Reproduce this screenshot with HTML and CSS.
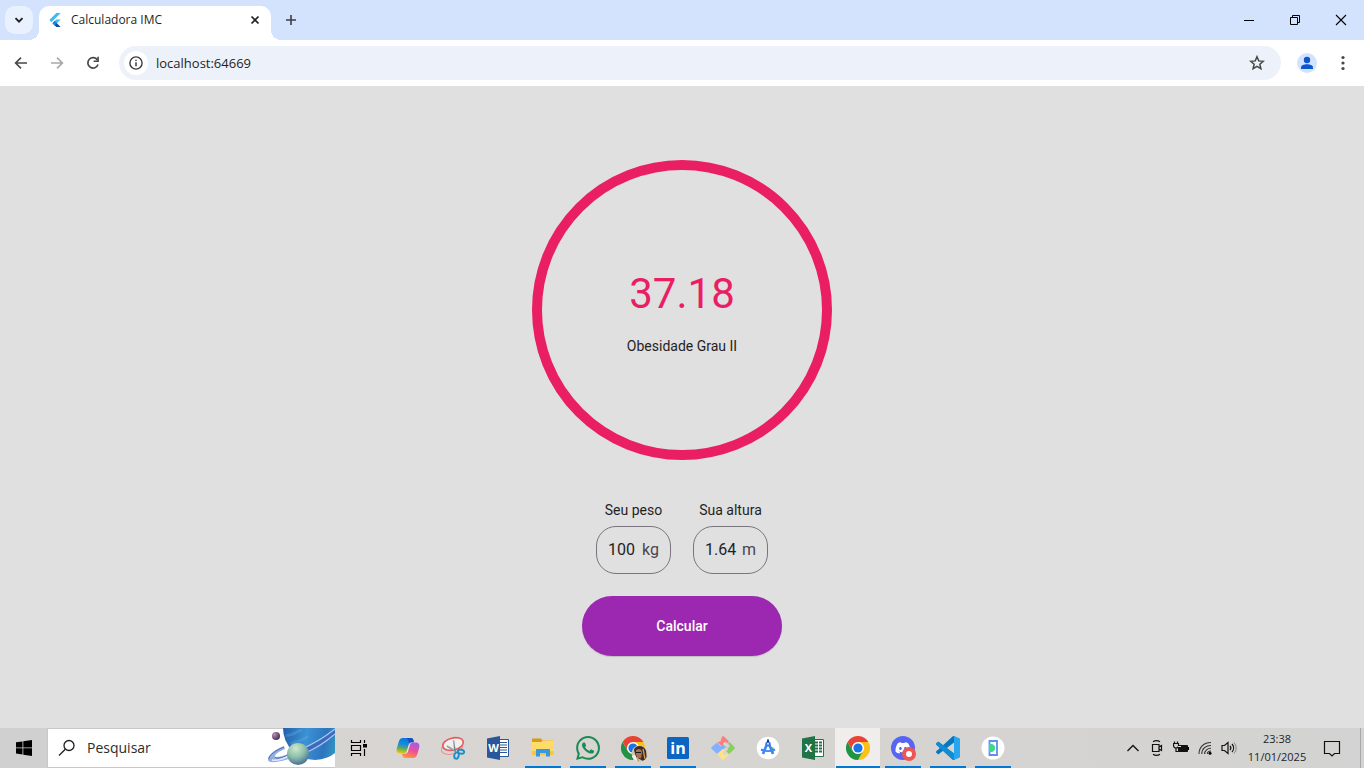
FILE: index.html
```html
<!DOCTYPE html>
<html lang="pt-BR">
<head>
<meta charset="utf-8">
<meta name="viewport" content="width=device-width, initial-scale=1">
<title>Calculadora IMC</title>
<link rel="stylesheet" href="styles.css">
</head>
<body class="desktop">
<svg class="defs" width="0" height="0" aria-hidden="true">
  <defs>
    <symbol id="chrome" viewBox="0 0 24 24">
      <circle cx="12" cy="12" r="11" fill="#fff"/>
      <path fill="#ea4335" d="M1.6 6A12 12 0 0 1 22.4 6H12A6 6 0 0 0 6.8 15Z"/>
      <path fill="#fbc116" d="M22.4 6A12 12 0 0 1 12 24L17.2 15A6 6 0 0 0 12 6Z"/>
      <path fill="#229342" d="M12 24A12 12 0 0 1 1.6 6L6.8 15A6 6 0 0 0 17.2 15Z"/>
      <circle cx="12" cy="12" r="4.6" fill="#1a73e8"/>
    </symbol>
  </defs>
</svg>

<header class="tabstrip">
  <button class="tab-search" aria-label="Pesquisar guias">
    <svg width="12" height="12" viewBox="0 0 12 12"><path d="M2.5 4.2 6 7.7 9.500 4.200" fill="none" stroke="#1f1f1f" stroke-width="1.900"/></svg>
  </button>
  <div class="tab">
    <svg width="12" height="14" viewBox="2 0 20 24"><path fill="#42b8f5" d="M14.300 0 2.300 12 6 15.700 21.700 0Z"/><path fill="#42b8f5" d="M14.300 11.070 7.860 17.530l3.700 3.700L21.700 11.070Z"/><path fill="#0b4f9e" d="M11.560 13.830l-3.700 3.700L14.330 24h7.370l-6.460-6.470Z"/><path fill="#1a86dc" d="M7.860 17.530l3.700-3.700 3.700 3.700-3.700 3.700Z"/></svg>
    <span class="tab-title">Calculadora IMC</span>
    <button class="tab-close" aria-label="Fechar guia">
      <svg width="10" height="10" viewBox="0 0 10 10"><path d="M1.500 1.500l7 7M8.500 1.500l-7 7" stroke="#1f1f1f" stroke-width="1.700"/></svg>
    </button>
  </div>
  <button class="new-tab" aria-label="Nova guia">
    <svg width="12" height="12" viewBox="0 0 12 12"><path d="M6 1v10M1 6h10" stroke="#3c3f43" stroke-width="1.600"/></svg>
  </button>
  <div class="window-controls">
    <button aria-label="Minimizar"><svg width="12" height="12" viewBox="0 0 12 12"><path d="M1 6.500h10" stroke="#000"/></svg></button>
    <button aria-label="Restaurar"><svg width="12" height="12" viewBox="0 0 12 12"><path d="M1.500 3.500h7v7h-7zM3.500 3.500v-2h7v7h-2" fill="none" stroke="#000"/></svg></button>
    <button aria-label="Fechar"><svg width="12" height="12" viewBox="0 0 12 12"><path d="M1 1l10 10M11 1 1 11" stroke="#000" stroke-width="1.100"/></svg></button>
  </div>
</header>

<nav class="toolbar">
  <button class="nav-button" aria-label="Voltar"><svg width="16" height="16" viewBox="0 0 16 16"><path d="M14 8H3M8 2.600 2.600 8 8 13.400" fill="none" stroke="#474747" stroke-width="1.600"/></svg></button>
  <button class="nav-button" aria-label="Avançar"><svg width="16" height="16" viewBox="0 0 16 16"><path d="M2 8h11M8 2.600 13.400 8 8 13.400" fill="none" stroke="#a8a8a8" stroke-width="1.600"/></svg></button>
  <button class="nav-button" aria-label="Recarregar"><svg width="16" height="16" viewBox="0 0 16 16"><path d="M13 9.500A5.200 5.200 0 1 1 12.400 5" fill="none" stroke="#474747" stroke-width="1.700"/><path d="M13.900 1.800v5.300H8.600V5.600h3.700V1.800Z" fill="#474747"/></svg></button>
  <div class="omnibox">
    <button class="site-info" aria-label="Informações do site"><svg width="14" height="14" viewBox="0 0 14 14"><circle cx="7" cy="7" r="6.100" fill="none" stroke="#3c3c3c" stroke-width="1.400"/><path d="M7 6.200v4M7 3.700v1.400" stroke="#3c3c3c" stroke-width="1.500"/></svg></button>
    <input class="url" type="text" aria-label="Endereço" value="localhost:64669">
    <button class="star" aria-label="Adicionar aos favoritos"><svg width="16" height="16" viewBox="0 0 16 16"><path d="M8 1.700l1.750 4.200 4.550.380-3.450 3 1.050 4.450L8 11.350l-3.900 2.380 1.050-4.450-3.450-3 4.550-.380Z" fill="none" stroke="#474747" stroke-width="1.500"/></svg></button>
  </div>
  <button class="profile" aria-label="Perfil"><svg width="20" height="20" viewBox="0 0 20 20"><circle cx="10" cy="10" r="10" fill="#d3e3fd"/><circle cx="10" cy="7" r="3.200" fill="#0b57d0"/><path d="M4 16v-1.300C4 12.300 7 11.300 10 11.300s6 1 6 3.400V16Z" fill="#0b57d0"/></svg></button>
  <button class="menu" aria-label="Menu"><svg width="16" height="16" viewBox="0 0 16 16" fill="#474747"><circle cx="8" cy="2.500" r="1.600"/><circle cx="8" cy="8" r="1.600"/><circle cx="8" cy="13.500" r="1.600"/></svg></button>
</nav>

<main class="app">
  <form class="calculator">
    <output class="result" for="peso altura">
      <span class="result-value">37.18</span>
      <span class="result-label">Obesidade Grau II</span>
    </output>
    <div class="fields">
      <div class="field">
        <label for="peso">Seu peso</label>
        <div class="field-box"><input id="peso" type="text" value="100"><span>kg</span></div>
      </div>
      <div class="field">
        <label for="altura">Sua altura</label>
        <div class="field-box"><input id="altura" type="text" value="1.64"><span>m</span></div>
      </div>
    </div>
    <button class="submit" type="button">Calcular</button>
  </form>
</main>

<footer class="taskbar">
  <button class="start" aria-label="Iniciar"><svg width="16" height="16" viewBox="0 0 16 16"><path d="M0 2.300 6.500 1.400v6.100H0ZM7.300 1.300 16 0v7.500H7.300ZM0 8.300h6.500v6.200L0 13.600ZM7.300 8.300H16V16l-8.700-1.300Z"/></svg></button>
  <div class="search">
    <svg class="search-glass" width="18" height="18" viewBox="0 0 18 18"><circle cx="11" cy="6.500" r="5" fill="none" stroke="#1f1f1f" stroke-width="1.300"/><path d="M7.300 10.200 1 16.500" stroke="#1f1f1f" stroke-width="1.300"/></svg>
    <input class="search-input" type="text" aria-label="Pesquisar" placeholder="Pesquisar">
    <svg class="planets" width="68" height="40" viewBox="0 0 68 40">
      <defs>
        <linearGradient id="planet" x1="0" y1=".6" x2="1" y2=".8"><stop offset="0" stop-color="#2560ad"/><stop offset=".35" stop-color="#3b93d3"/><stop offset=".65" stop-color="#2d75bf"/><stop offset="1" stop-color="#39b3c4"/></linearGradient>
        <linearGradient id="ring" x1="0" x2="1"><stop offset="0" stop-color="#8196d2"/><stop offset=".3" stop-color="#b8d2f2"/><stop offset=".6" stop-color="#4668bb"/><stop offset="1" stop-color="#9db8e8"/></linearGradient>
        <radialGradient id="green" cx=".4" cy=".25" r=".8"><stop offset="0" stop-color="#cfe9ca"/><stop offset=".5" stop-color="#8dbfae"/><stop offset="1" stop-color="#41668e"/></radialGradient>
        <radialGradient id="moon" cx=".3" cy=".3" r=".8"><stop offset="0" stop-color="#b792b0"/><stop offset="1" stop-color="#422757"/></radialGradient>
      </defs>
      <circle cx="48" cy="0" r="32" fill="url(#planet)"/>
      <path d="M19 7c6 2 10-4 16-5M24 16c6-3 12-3 17-8" stroke="#66b7df" stroke-width="3" fill="none" opacity=".3"/>
      <path d="M17 18C9 21 0 27 1 32c1 4 13 2 23-2l-3-4c-7 3-13 4-13 2 0-2 5-5 10-7Z" fill="#93aee0"/>
      <path d="M17 19C9 22 2 27 2 31M8 29c1 2 7 1 13-2" fill="none" stroke="#5169b2"/>
      <path d="M5 32c4 1 11-1 17-4" fill="none" stroke="#dbe9fb" stroke-width="1.500"/>
      <path d="M34 22C47 17 59 9 68 1v6C60 14 50 20 38 25Z" fill="#3f69bd"/>
      <path d="M34 21C47 16 59 8 68 1M38 25C50 20 60 13 68 6" fill="none" stroke="#a9c8f2" stroke-width="1.200"/>
      <circle cx="31" cy="26" r="11" fill="url(#green)"/>
      <circle cx="9" cy="8" r="4" fill="url(#moon)"/>
    </svg>
  </div>
  <button class="task-view" aria-label="Visão de tarefas"><svg width="18" height="16" viewBox="0 0 18 16"><path d="M1.500 0v2.500h9V0M1.500 16v-2.500h9V16M1.500 5.500h9v5h-9zM14.500 0v3M14.500 9v7" fill="none" stroke="#000" stroke-width="1.200"/><path d="M13 4h4v3.500h-4Z"/></svg></button>

  <div class="apps">
    <button class="app-button" aria-label="Copilot"><svg width="24" height="24" viewBox="0 0 24 24">
      <defs>
        <linearGradient id="cpa" x1=".4" y1="0" x2=".2" y2="1"><stop offset="0" stop-color="#0876dd"/><stop offset=".4" stop-color="#168ce0"/><stop offset=".65" stop-color="#59ac59"/><stop offset="1" stop-color="#fbc80d"/></linearGradient>
        <linearGradient id="cpb" x1=".7" y1="0" x2=".3" y2="1"><stop offset="0" stop-color="#a55be8"/><stop offset=".5" stop-color="#ee4f95"/><stop offset="1" stop-color="#ff9a3d"/></linearGradient>
      </defs>
      <path fill="url(#cpa)" d="M7 2h8c1.500 0 2 .8 2.400 2L18 6.200h-2c-2 0-2.600 1-3.200 3L11 15c-.5 1.800-1.500 2.500-3 2.500H4C1 17.500 0 15 1 11.500L3 5c.6-2 2-3 4-3Z"/>
      <path fill="#1a4ebc" d="M11 2h4c1.500 0 2 .8 2.400 2L18 6.200h-2c-1.400 0-2 .7-2.500 1.500Z"/>
      <path fill="url(#cpb)" d="M17 22H9c-1.500 0-2-.8-2.400-2L6 17.800h2c2 0 2.600-1 3.200-3L13 9c.5-1.800 1.500-2.500 3-2.500h4c3 0 4 2.500 3 6L21 19c-.6 2-2 3-4 3Z"/>
      <path fill="#e9e1e3" d="M12.500 9.500c.5-2 1.500-3 3.500-3-1.200.5-1.700 1.500-2 2.500l-2 6.500c-.6 1.700-1.700 2.300-4 2.300 1.700-.5 2.200-1.300 2.700-2.800Z"/>
    </svg></button>
    <button class="app-button" aria-label="Ferramenta de Captura"><svg width="24" height="24" viewBox="0 0 24 24">
      <ellipse cx="11" cy="12" rx="11" ry="6" transform="rotate(-14 11 12)" fill="none" stroke="#ef9290"/>
      <ellipse cx="12" cy="8" rx="10.500" ry="6" transform="rotate(-14 12 8)" fill="#f1efef" stroke="#e45b5b" stroke-width="1.600"/>
      <path d="M12.500 4.500 14 14.500M6 10l9 5.500" stroke="#7b858d" stroke-width="1.500"/>
      <path d="M13 4.500 12.500 13M6 9.500l7 4.500" stroke="#c7ced2" stroke-width=".8"/>
      <ellipse cx="15.500" cy="19.500" rx="2.200" ry="3.200" transform="rotate(12 15.500 19.500)" fill="none" stroke="#1d8fc7" stroke-width="1.900"/>
      <ellipse cx="20" cy="15.700" rx="3.200" ry="2" transform="rotate(12 20 15.700)" fill="none" stroke="#1d8fc7" stroke-width="1.900"/>
    </svg></button>
    <button class="app-button" aria-label="Word"><svg width="24" height="24" viewBox="0 0 24 24">
      <path d="M12 3.500h10.500v17H12Z" fill="#fff" stroke="#2b579a"/><path d="M14 6.500h7M14 9h7M14 11.500h7M14 14h7M14 16.500h7" stroke="#2b579a" stroke-width="1.100"/><path d="M1 2.500 14 0v24L1 21.500Z" fill="#2b579a"/><text class="office-letter" x="7.500" y="16" text-anchor="middle">W</text>
    </svg></button>
    <button class="app-button running" aria-label="Explorador de Arquivos"><svg width="24" height="24" viewBox="0 0 24 24">
      <path d="M1 3.500c0-.6.300-1 1-1h8l1.500 2H22v4H1Z" fill="#d99b16"/><path d="M1 6h9l2-1.500h9.500c.6 0 1 .4 1 1V19H1Z" fill="#ffdb6a"/><path d="M1 15h21.500v4H1Z" fill="#f7c545"/><path d="M5 20.500V14c0-.6.400-1 1-1h12c.6 0 1 .4 1 1v6.500h-4V17H9v3.500Z" fill="#3797df"/>
    </svg></button>
    <button class="app-button running" aria-label="WhatsApp"><svg width="24" height="24" viewBox="0 0 24 24" fill="#1a8b55"><path d="M17.472 14.382c-.297-.149-1.758-.867-2.030-.967-.273-.099-.471-.148-.670.150-.197.297-.767.966-.940 1.164-.173.199-.347.223-.644.075-.297-.150-1.255-.463-2.390-1.475-.883-.788-1.480-1.761-1.653-2.059-.173-.297-.018-.458.130-.606.134-.133.298-.347.446-.520.149-.174.198-.298.298-.497.099-.198.050-.371-.025-.520-.075-.149-.669-1.612-.916-2.207-.242-.579-.487-.500-.669-.510-.173-.008-.371-.010-.570-.010-.198 0-.520.074-.792.372-.272.297-1.040 1.016-1.040 2.479 0 1.462 1.065 2.875 1.213 3.074.149.198 2.096 3.200 5.077 4.487.709.306 1.262.489 1.694.625.712.227 1.360.195 1.871.118.571-.085 1.758-.719 2.006-1.413.248-.694.248-1.289.173-1.413-.074-.124-.272-.198-.570-.347m-5.421 7.403h-.004a9.870 9.870 0 0 1-5.031-1.378l-.361-.214-3.741.982.998-3.648-.235-.374a9.860 9.860 0 0 1-1.510-5.260c.001-5.450 4.436-9.884 9.888-9.884 2.640 0 5.122 1.030 6.988 2.898a9.825 9.825 0 0 1 2.893 6.994c-.003 5.450-4.437 9.884-9.885 9.884m8.413-18.297A11.815 11.815 0 0 0 12.050 0C5.495 0 .160 5.335.157 11.892c0 2.096.547 4.142 1.588 5.945L.057 24l6.305-1.654a11.882 11.882 0 0 0 5.683 1.448h.005c6.554 0 11.890-5.335 11.893-11.893a11.821 11.821 0 0 0-3.480-8.413z"/></svg></button>
    <button class="app-button running" aria-label="Chrome, perfil"><svg class="badged" width="24" height="24" viewBox="0 0 24 24">
      <use href="#chrome" width="24" height="24"/>
      <clipPath id="face"><circle cx="18.500" cy="17.500" r="8"/></clipPath>
      <g clip-path="url(#face)"><path d="M10 9h18v18H10Z" fill="#cfc3b2"/><path d="M13 14c1-5 10-6 12 1l1 10h-4l-7-4Z" fill="#3c2c25"/><path d="M15 14c3-2 6-1 6 3l-1 5c-3 1-5-2-5-4Z" fill="#a87350"/><path d="M10 21c3-4 6-2 6 5h-6Z" fill="#f5eee8"/><path d="M16 21l2 6M22 13l2 10" stroke="#d09d45" stroke-width="1.300"/><path d="M15 16.500h5" stroke="#191717" stroke-width="1.200"/></g>
    </svg></button>
    <button class="app-button running" aria-label="LinkedIn"><svg width="22" height="22" viewBox="0 0 22 22"><rect width="22" height="22" rx="1.500" fill="#0a66c2"/><text class="linkedin-letters" x="11" y="17" text-anchor="middle">in</text></svg></button>
    <button class="app-button" aria-label="Git"><svg width="24" height="24" viewBox="0 0 24 24">
      <path fill="#ff7b80" d="M11 .6c.6-.6 1.400-.6 2 0L18 5.500l-2 2a2 2 0 1 0-2.500 2.500L12 11.500 6.500 6l3-.5Z"/>
      <path fill="#83b1ff" d="M6 6.500l4 4a2 2 0 1 1 1.500 2.500L6 17.800.700 13c-.7-.6-.7-1.400 0-2Z"/>
      <path fill="#87cf60" d="M18.500 6l4.900 5c.6.600.6 1.400 0 2L18 18l-3-3a2 2 0 1 0-2-2L12.500 12l2-2a2 2 0 1 0 2-2Z"/>
      <path fill="#ffe382" d="M12 13.500l2 1.500a2 2 0 1 0 2 2l1.500 1.500-4.500 5c-.6.600-1.400.600-2 0l-4.500-5Z"/>
    </svg></button>
    <button class="app-button" aria-label="Android Studio"><svg width="24" height="24" viewBox="0 0 24 24">
      <circle cx="12" cy="12" r="11.300" fill="#fff"/><path d="M14 11.500h3.500V16H15Z" fill="#35b768"/><path d="M5 13.500c4 2 10 2 14 0" stroke="#4285f4" stroke-width="2" fill="none"/><path d="M11 8 7 18M13 8l4 10" stroke="#4285f4" stroke-width="2.600"/><circle cx="12" cy="7.800" r="2.600" fill="#3976dd"/><circle cx="12" cy="7.800" r=".9" fill="#fff"/><path d="M11 3.500h2v2.500h-2Z" fill="#25396f"/>
    </svg></button>
    <button class="app-button" aria-label="Excel"><svg width="24" height="24" viewBox="0 0 24 24">
      <path d="M12 3.500h10.500v17H12Z" fill="#fff" stroke="#217346"/><path d="M14 6.500h3M18 6.500h3M14 9.500h3M18 9.500h3M14 12.500h3M18 12.500h3M14 15.500h3M18 15.500h3" stroke="#217346" stroke-width="1.800"/><path d="M1 2.500 14 0v24L1 21.500Z" fill="#217346"/><text class="office-letter" x="7.500" y="16" text-anchor="middle">X</text>
    </svg></button>
    <button class="app-button running active" aria-label="Google Chrome"><svg width="24" height="24" viewBox="0 0 24 24"><use href="#chrome"/></svg></button>
    <button class="app-button running" aria-label="Discord"><svg class="badged" width="24" height="24" viewBox="0 0 24 24">
      <circle cx="12" cy="12" r="12" fill="#5865f2"/>
      <g transform="translate(4.500 4.500) scale(.62)"><path fill="#fff" d="M20.317 4.370a19.800 19.800 0 0 0-4.885-1.515l-.687 1.286a18.300 18.300 0 0 0-5.487 0l-.696-1.286a19.740 19.740 0 0 0-4.885 1.515C.533 9.046-.319 13.580.100 18.058c2.050 1.560 4.070 2.480 6.020 3.090l1.310-2.020-1.920-1 .5-.42c3.930 1.793 8.180 1.793 12.060 0l.5.420-1.920 1 1.230 2.100c1.960-.610 3.950-1.520 6-3.030.5-5.310-.84-9.810-3.560-13.830zM8.020 15.330c-1.180 0-2.160-1.090-2.160-2.420s.960-2.420 2.160-2.420 2.180 1.100 2.160 2.420c0 1.330-.960 2.420-2.160 2.420zm7.980 0c-1.190 0-2.160-1.090-2.160-2.420s.950-2.420 2.160-2.420 2.170 1.100 2.150 2.420c0 1.330-.940 2.420-2.150 2.420z"/></g>
      <circle cx="18" cy="18" r="7" fill="#ed5656"/><circle cx="18" cy="18" r="3" fill="#fff"/>
    </svg></button>
    <button class="app-button running" aria-label="Visual Studio Code"><svg width="24" height="24" viewBox="0 0 24 24">
      <path fill="#0877bd" d="M23.150 2.587 18.210.210a1.494 1.494 0 0 0-1.705.290l-9.460 8.630-4.120-3.128a.999.999 0 0 0-1.276.057L.327 7.261A1 1 0 0 0 .326 8.740L3.899 12 .326 15.260a1 1 0 0 0 .001 1.479L1.650 17.940a.999.999 0 0 0 1.276.057l4.120-3.128 9.460 8.630a1.492 1.492 0 0 0 1.704.290l4.942-2.377A1.500 1.500 0 0 0 24 20.060V3.939a1.500 1.500 0 0 0-.850-1.352zm-5.146 14.861L10.826 12l7.178-5.448z"/>
      <path fill="#27a7f1" d="M18 .200 23.150 2.587A1.500 1.500 0 0 1 24 3.939V20.060a1.500 1.500 0 0 1-.850 1.350L18 23.800Z"/>
      <path fill="#118dd4" d="M1.650 6.060a1 1 0 0 1 1.276-.06L18 17.450v6.350a1.500 1.500 0 0 1-1.500-.3L.330 8.740a1 1 0 0 1 0-1.480Z"/>
    </svg></button>
    <button class="app-button running" aria-label="Emulador"><svg width="24" height="24" viewBox="0 0 24 24">
      <circle cx="12" cy="12" r="11.500" fill="#fff"/><path d="M8.500 5h7.500v14H8.500Z" fill="#fff" stroke="#5b91f2" stroke-width="1.800"/><path d="M8 8h2c3 0 4 2 4 4s-1 4-4 4H8Z" fill="#39d985"/>
    </svg></button>
  </div>

  <div class="tray">
    <button class="tray-button" aria-label="Ícones ocultos"><svg width="14" height="14" viewBox="0 0 14 14"><path d="M1.500 10 7 4.500l5.500 5.500" fill="none" stroke="#111" stroke-width="1.300"/></svg></button>
    <button class="tray-button" aria-label="Reunir agora"><svg width="14" height="16" viewBox="0 0 14 16"><path d="M2.500 4.500h6.500v7h-6.500ZM9 7l2.500-1.500v5L9 9M3 1.800C5 .500 8 .500 10 1.800M3 14.200c2 1.300 5 1.300 7 0" fill="none" stroke="#111" stroke-width="1.200"/></svg></button>
    <button class="tray-button" aria-label="Bateria"><svg width="16" height="16" viewBox="0 0 16 16"><path d="M5.500 5.500h9v6h-9Z" fill="#111" stroke="#111"/><path d="M14.500 7H16v3h-1.500Z"/><path d="M1.500 1.500v2M4.500 1.500v2M.500 3.500h5v2a2.500 2.500 0 0 1-5 0ZM3 8v3.500h2.500" fill="none" stroke="#111" stroke-width="1.200"/><path d="M5 6.500h3" stroke="#ddd"/></svg></button>
    <button class="tray-button" aria-label="Rede"><svg width="14" height="14" viewBox="0 0 14 14"><path d="M1 13C1 6 6 1.500 13 1.500M3.800 13C3.800 7.500 8 4.500 13 4.500M6.600 13c0-3.500 3-5.700 6.400-5.700M9.300 13c0-2 1.500-3 3.700-3" fill="none" stroke="#333" stroke-width="1.100"/><circle cx="12" cy="12.300" r="1.500"/></svg></button>
    <button class="tray-button" aria-label="Volume"><svg width="16" height="14" viewBox="0 0 16 14"><path d="M1 4.500h2.500L7 1.500v11L3.500 9.500H1ZM9 5a3 3 0 0 1 0 4M11 3a6 6 0 0 1 0 8" fill="none" stroke="#111" stroke-width="1.200"/><path d="M13 1.500a8 8 0 0 1 0 11" fill="none" stroke="#888"/></svg></button>
    <button class="clock"><span>23:38</span><span>11/01/2025</span></button>
    <button class="notifications" aria-label="Notificações"><svg width="18" height="18" viewBox="0 0 18 18"><path d="M1.500 2.500h15v12h-5L9 17l-2.500-2.500h-5Z" fill="none" stroke="#111" stroke-width="1.200"/></svg></button>
    <button class="show-desktop" aria-label="Mostrar área de trabalho"></button>
  </div>
</footer>
</body>
</html>
```
FILE: styles.css
```css
* { box-sizing: border-box; }

.desktop {
  margin: 0;
  min-height: 100vh;
  display: flex;
  flex-direction: column;
  background: #e0e0e0;
  font-family: "Open Sans", "Noto Sans", sans-serif;
  font-size: 12px;
  color: #1f1f1f;
}

.defs { position: absolute; }

button {
  display: flex;
  align-items: center;
  justify-content: center;
  flex: none;
  margin: 0;
  padding: 0;
  border: 0;
  background: none;
  color: inherit;
  font: inherit;
}

input {
  min-width: 0;
  margin: 0;
  padding: 0;
  border: 0;
  outline: 0;
  background: none;
  color: inherit;
  font: inherit;
}

svg { display: block; flex: none; }

/* Tab strip */
.tabstrip {
  display: flex;
  align-items: flex-start;
  height: 40px;
  padding: 6px 0 0 5px;
  background: #d3e3fd;
}

.tab-search {
  width: 28px;
  height: 28px;
  border-radius: 10px;
  background: #e9f1fe;
}

.tab {
  position: relative;
  display: flex;
  align-items: center;
  gap: 10px;
  width: 232px;
  height: 34px;
  margin-left: 6px;
  padding: 0 6px 6px 10px;
  border-radius: 10px 10px 0 0;
  background: #fff;
}

.tab::before,
.tab::after {
  content: "";
  position: absolute;
  bottom: 0;
  width: 10px;
  height: 10px;
}

.tab::before {
  right: 100%;
  background: radial-gradient(circle at 0 0, transparent 10px, #fff 10px);
}

.tab::after {
  left: 100%;
  background: radial-gradient(circle at 100% 0, transparent 10px, #fff 10px);
}

.tab-title { flex: 1; line-height: 16px; }
.tab-close { width: 20px; height: 20px; }
.new-tab { width: 28px; height: 28px; margin-left: 6px; }

.window-controls { display: flex; margin-left: auto; }
.window-controls button { width: 46px; height: 28px; }

/* Toolbar */
.toolbar {
  display: flex;
  align-items: center;
  height: 46px;
  padding: 0 8px 0 3px;
  background: #fff;
}

.nav-button { width: 36px; height: 34px; }

.omnibox {
  flex: 1;
  display: flex;
  align-items: center;
  height: 34px;
  margin-left: 8px;
  padding: 0 16px 0 5px;
  border-radius: 17px;
  background: #edf2fa;
}

.site-info {
  width: 24px;
  height: 24px;
  border-radius: 50%;
  background: #fff;
}

.url {
  flex: 1;
  margin-left: 8px;
  font-size: 13px;
  line-height: 20px;
}

.profile { width: 20px; margin-left: 16px; }
.menu { width: 26px; margin-left: 13px; }

/* Calculator */
.app {
  flex: 1;
  display: flex;
  align-items: center;
  justify-content: center;
  padding-top: 2px;
  font-family: Roboto, sans-serif;
  font-size: 14px;
  line-height: 20px;
}

.calculator {
  display: flex;
  flex-direction: column;
  align-items: center;
}

.result {
  display: flex;
  flex-direction: column;
  align-items: center;
  justify-content: center;
  gap: 16px;
  width: 300px;
  height: 300px;
  margin-bottom: 40px;
  padding-top: 4px;
  border: 10px solid #e91e63;
  border-radius: 50%;
}

.result-value {
  color: #e91e63;
  font-size: 42px;
  line-height: 52px;
}

.fields { display: flex; gap: 22px; margin-bottom: 22px; }

.field {
  display: flex;
  flex-direction: column;
  align-items: center;
  gap: 6px;
  width: 75px;
}

.field-box {
  display: flex;
  align-items: center;
  width: 100%;
  height: 48px;
  padding: 0 11px;
  border: 1px solid #79747e;
  border-radius: 20px;
  font-size: 16px;
  line-height: 24px;
}

.field-box input { flex: 1; }
.field-box span { color: #49454f; }

.submit {
  width: 200px;
  height: 60px;
  border-radius: 30px;
  background: #9c27b0;
  box-shadow: 0 1px 1px rgba(0, 0, 0, .15);
  color: #fff;
  font-weight: 500;
}

/* Taskbar */
.taskbar {
  display: flex;
  height: 40px;
  background: linear-gradient(90deg, #d0d0d0, #d8d5d2 30%, #d6d4d1 65%, #d3d3d3);
}

.start { width: 47px; }

.search {
  display: flex;
  align-items: center;
  width: 288px;
  border-left: 1px solid #c8c8c8;
  background: #fff;
  box-shadow: inset 0 1px #c8c8c8, inset 0 -1px #c8c8c8;
}

.search-glass { margin-left: 10px; }

.search-input {
  flex: 1;
  margin-left: 11px;
  font-size: 14px;
  line-height: 20px;
}

.search-input::placeholder { color: #2b2b2b; opacity: 1; }

.task-view { width: 48px; }

.apps { display: flex; margin-left: 2px; }

.app-button {
  width: 45px;
  height: 40px;
}

.running {
  background: linear-gradient(#0078d7, #0078d7) center bottom / 36px 2px no-repeat;
}

.active {
  background: linear-gradient(#0078d7, #0078d7) center bottom / 44px 2px no-repeat, #f0eeec;
}

.badged { overflow: visible; }

.office-letter {
  fill: #fff;
  font: bold 11px "Open Sans", sans-serif;
}

.linkedin-letters {
  fill: #fff;
  font: bold 16px "Open Sans", sans-serif;
}

.tray { display: flex; margin-left: auto; }
.tray-button { width: 24px; }

.clock {
  flex-direction: column;
  width: 72px;
  font-size: 11px;
  line-height: 18px;
}

.notifications { width: 38px; margin-right: 9px; }

.show-desktop {
  width: 4px;
  border-left: 1px solid #a8a8a8;
}
```
